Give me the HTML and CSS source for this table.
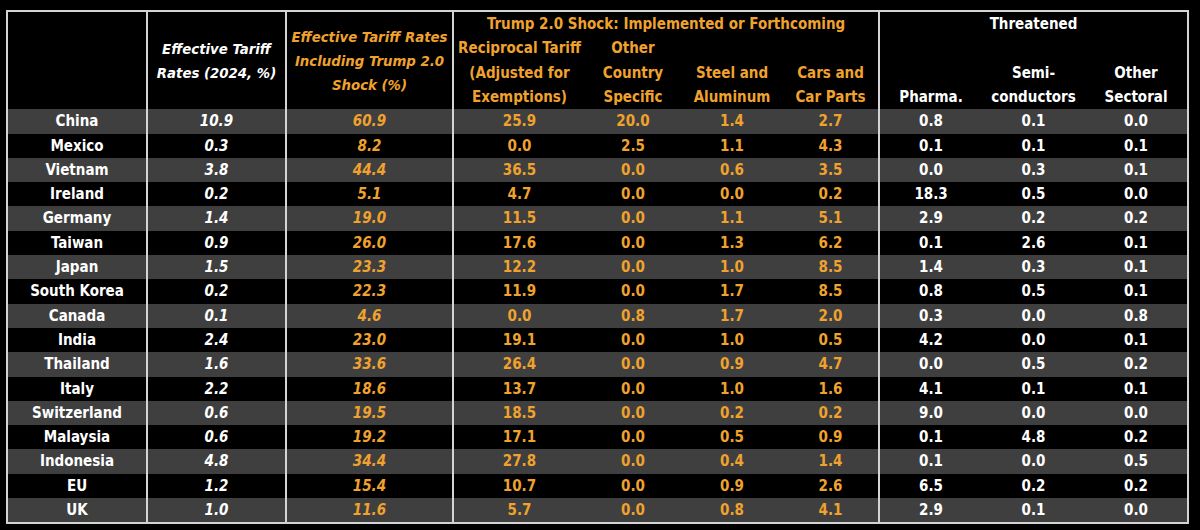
FILE: index.html
```html
<!DOCTYPE html>
<html>
<head>
<meta charset="utf-8">
<link rel="stylesheet" href="styles.css">
</head>
<body>
<table class="tbl">
  <colgroup>
    <col class="c-country"><col class="c-base"><col class="c-incl">
    <col class="c-recip"><col class="c-other"><col class="c-steel"><col class="c-cars">
    <col class="c-th"><col class="c-th"><col class="c-th">
  </colgroup>
  <thead>
    <tr class="hrow1">
      <th class="gb" rowspan="2"></th>
      <th class="gb wh it mid" rowspan="2">Effective Tariff<br>Rates (2024, %)</th>
      <th class="gb or it mid" rowspan="2">Effective Tariff Rates<br>Including Trump 2.0<br>Shock (%)</th>
      <th class="gb or grp" colspan="4">Trump 2.0 Shock: Implemented or Forthcoming</th>
      <th class="wh grp" colspan="3">Threatened</th>
    </tr>
    <tr class="hrow2">
      <th class="or bot">Reciprocal Tariff<br>(Adjusted for<br>Exemptions)</th>
      <th class="or bot">Other<br>Country<br>Specific</th>
      <th class="or bot">Steel and<br>Aluminum</th>
      <th class="or bot gb">Cars and<br>Car Parts</th>
      <th class="wh bot">Pharma.</th>
      <th class="wh bot">Semi-<br>conductors</th>
      <th class="wh bot">Other<br>Sectoral</th>
    </tr>
  </thead>
  <tbody>
    <tr><td class="gb">China</td><td class="gb it">10.9</td><td class="gb it or">60.9</td><td class="or">25.9</td><td class="or">20.0</td><td class="or">1.4</td><td class="or gb">2.7</td><td>0.8</td><td>0.1</td><td>0.0</td></tr>
    <tr><td class="gb">Mexico</td><td class="gb it">0.3</td><td class="gb it or">8.2</td><td class="or">0.0</td><td class="or">2.5</td><td class="or">1.1</td><td class="or gb">4.3</td><td>0.1</td><td>0.1</td><td>0.1</td></tr>
    <tr><td class="gb">Vietnam</td><td class="gb it">3.8</td><td class="gb it or">44.4</td><td class="or">36.5</td><td class="or">0.0</td><td class="or">0.6</td><td class="or gb">3.5</td><td>0.0</td><td>0.3</td><td>0.1</td></tr>
    <tr><td class="gb">Ireland</td><td class="gb it">0.2</td><td class="gb it or">5.1</td><td class="or">4.7</td><td class="or">0.0</td><td class="or">0.0</td><td class="or gb">0.2</td><td>18.3</td><td>0.5</td><td>0.0</td></tr>
    <tr><td class="gb">Germany</td><td class="gb it">1.4</td><td class="gb it or">19.0</td><td class="or">11.5</td><td class="or">0.0</td><td class="or">1.1</td><td class="or gb">5.1</td><td>2.9</td><td>0.2</td><td>0.2</td></tr>
    <tr><td class="gb">Taiwan</td><td class="gb it">0.9</td><td class="gb it or">26.0</td><td class="or">17.6</td><td class="or">0.0</td><td class="or">1.3</td><td class="or gb">6.2</td><td>0.1</td><td>2.6</td><td>0.1</td></tr>
    <tr><td class="gb">Japan</td><td class="gb it">1.5</td><td class="gb it or">23.3</td><td class="or">12.2</td><td class="or">0.0</td><td class="or">1.0</td><td class="or gb">8.5</td><td>1.4</td><td>0.3</td><td>0.1</td></tr>
    <tr><td class="gb">South Korea</td><td class="gb it">0.2</td><td class="gb it or">22.3</td><td class="or">11.9</td><td class="or">0.0</td><td class="or">1.7</td><td class="or gb">8.5</td><td>0.8</td><td>0.5</td><td>0.1</td></tr>
    <tr><td class="gb">Canada</td><td class="gb it">0.1</td><td class="gb it or">4.6</td><td class="or">0.0</td><td class="or">0.8</td><td class="or">1.7</td><td class="or gb">2.0</td><td>0.3</td><td>0.0</td><td>0.8</td></tr>
    <tr><td class="gb">India</td><td class="gb it">2.4</td><td class="gb it or">23.0</td><td class="or">19.1</td><td class="or">0.0</td><td class="or">1.0</td><td class="or gb">0.5</td><td>4.2</td><td>0.0</td><td>0.1</td></tr>
    <tr><td class="gb">Thailand</td><td class="gb it">1.6</td><td class="gb it or">33.6</td><td class="or">26.4</td><td class="or">0.0</td><td class="or">0.9</td><td class="or gb">4.7</td><td>0.0</td><td>0.5</td><td>0.2</td></tr>
    <tr><td class="gb">Italy</td><td class="gb it">2.2</td><td class="gb it or">18.6</td><td class="or">13.7</td><td class="or">0.0</td><td class="or">1.0</td><td class="or gb">1.6</td><td>4.1</td><td>0.1</td><td>0.1</td></tr>
    <tr><td class="gb">Switzerland</td><td class="gb it">0.6</td><td class="gb it or">19.5</td><td class="or">18.5</td><td class="or">0.0</td><td class="or">0.2</td><td class="or gb">0.2</td><td>9.0</td><td>0.0</td><td>0.0</td></tr>
    <tr><td class="gb">Malaysia</td><td class="gb it">0.6</td><td class="gb it or">19.2</td><td class="or">17.1</td><td class="or">0.0</td><td class="or">0.5</td><td class="or gb">0.9</td><td>0.1</td><td>4.8</td><td>0.2</td></tr>
    <tr><td class="gb">Indonesia</td><td class="gb it">4.8</td><td class="gb it or">34.4</td><td class="or">27.8</td><td class="or">0.0</td><td class="or">0.4</td><td class="or gb">1.4</td><td>0.1</td><td>0.0</td><td>0.5</td></tr>
    <tr><td class="gb">EU</td><td class="gb it">1.2</td><td class="gb it or">15.4</td><td class="or">10.7</td><td class="or">0.0</td><td class="or">0.9</td><td class="or gb">2.6</td><td>6.5</td><td>0.2</td><td>0.2</td></tr>
    <tr><td class="gb">UK</td><td class="gb it">1.0</td><td class="gb it or">11.6</td><td class="or">5.7</td><td class="or">0.0</td><td class="or">0.8</td><td class="or gb">4.1</td><td>2.9</td><td>0.1</td><td>0.0</td></tr>
  </tbody>
</table>
</body>
</html>
```

FILE: styles.css
```css
html, body {
  margin: 0;
  padding: 0;
  background: #000;
}
body {
  padding: 10px 0 0 6px;
  font-family: "DejaVu Sans Condensed", "Liberation Sans", sans-serif;
  font-weight: bold;
  color: #fff;
}
.tbl {
  border-collapse: collapse;
  table-layout: fixed;
  width: 1183px;
  border: 2px solid #d4d4d4;
}
.c-country { width: 140px; }
.c-base { width: 139px; }
.c-incl { width: 167px; }
.c-recip { width: 132px; }
.c-other { width: 96px; }
.c-steel { width: 102px; }
.c-cars { width: 96px; }
.c-th { width: 103px; }

th, td {
  padding: 0;
  text-align: center;
  font-size: 15px;
  line-height: 24.3px;
  white-space: nowrap;
}
th {
  font-weight: bold;
}
.hrow1 th { height: 24px; vertical-align: middle; }
.hrow1 th.grp { vertical-align: top; }
.hrow1 th.mid { vertical-align: middle; font-size: 14.8px; line-height: 23.8px; }
.hrow2 th { height: 73px; }
.bot { vertical-align: bottom; }
td { height: 24.3px; }
.gb { border-right: 2px solid #d4d4d4; }
.wh { color: #fff; }
.or { color: #f0a22e; }
.it { font-style: italic; }
tbody tr:nth-child(odd) td { background: #3f3f3f; }
```
